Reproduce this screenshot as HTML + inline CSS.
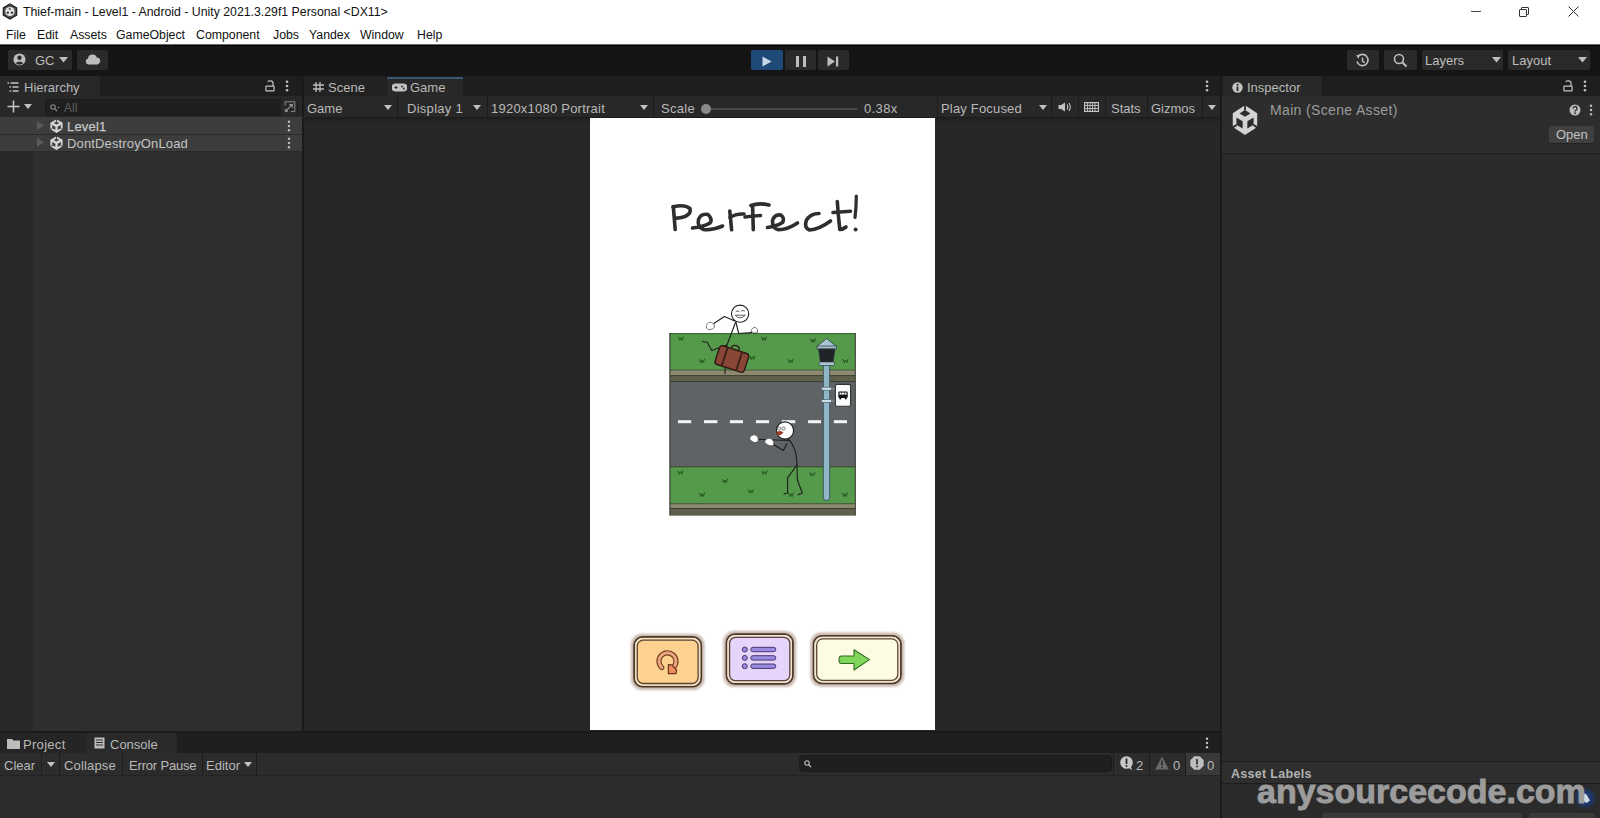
<!DOCTYPE html>
<html><head><meta charset="utf-8">
<style>
*{margin:0;padding:0;box-sizing:border-box}
html,body{width:1600px;height:818px;overflow:hidden;background:#282828;font-family:"Liberation Sans",sans-serif}
div,svg{position:absolute}
.t{white-space:nowrap;line-height:1;font-size:13px;color:#b9b9b9}
.k{color:#111;font-size:12.3px}
.btn{background:#2a2a2a;border-radius:2px}
.dv{width:1px;background:#1c1c1c}
</style></head><body>
<svg style="left:0;top:0" width="0" height="0"><defs><symbol id="ulogo" viewBox="0 0 100 100" preserveAspectRatio="none">
<path d="M50 1 L97 27.5 V73.5 L50 100 L3 73.5 V27.5Z" fill="#d4d4d4"/>
<path d="M50 17 L71 28.5 L50 39 L29 28.5Z" fill="currentColor"/>
<path d="M17 42 L41 54.5 V78 L17 66Z" fill="currentColor"/>
<path d="M83 42 L59 54.5 V78 L83 66Z" fill="currentColor"/>
<path d="M50 0 V18" stroke="currentColor" stroke-width="7"/>
<path d="M0 76.5 L18 66" stroke="currentColor" stroke-width="7"/>
<path d="M100 76.5 L82 66" stroke="currentColor" stroke-width="7"/>
</symbol></defs></svg>
<!-- ============ title bar ============ -->
<div style="left:0;top:0;width:1600px;height:44px;background:#fff"></div>
<div style="left:0;top:44px;width:1600px;height:1px;background:#6a6a6a"></div>
<div style="left:0;top:45px;width:1600px;height:1px;background:#050505"></div>
<svg style="left:2px;top:3px" width="16" height="17" viewBox="0 0 16 17">
  <path d="M8 1 L14.6 4.8 L14.6 12.2 L8 16 L1.4 12.2 L1.4 4.8 Z" fill="#555" stroke="#222" stroke-width="1.4"/>
  <circle cx="7.9" cy="8.5" r="4.6" fill="#e6e6e6"/>
  <circle cx="7.8" cy="6" r="1.2" fill="#777"/><circle cx="5.8" cy="9.6" r="1.2" fill="#333"/><circle cx="9.9" cy="9.6" r="1.2" fill="#333"/>
</svg>
<div class="t k" style="left:23px;top:6px">Thief-main - Level1 - Android - Unity 2021.3.29f1 Personal &lt;DX11&gt;</div>
<div class="t k" style="left:6px;top:28.5px">File</div>
<div class="t k" style="left:37px;top:28.5px">Edit</div>
<div class="t k" style="left:70px;top:28.5px">Assets</div>
<div class="t k" style="left:116px;top:28.5px">GameObject</div>
<div class="t k" style="left:196px;top:28.5px">Component</div>
<div class="t k" style="left:273px;top:28.5px">Jobs</div>
<div class="t k" style="left:309px;top:28.5px">Yandex</div>
<div class="t k" style="left:360px;top:28.5px">Window</div>
<div class="t k" style="left:417px;top:28.5px">Help</div>
<!-- window controls -->
<div style="left:1471px;top:11px;width:10px;height:1px;background:#444"></div>
<div style="left:1521px;top:6.5px;width:8px;height:8px;border:1px solid #333;border-radius:1px;background:#fff"></div>
<div style="left:1519px;top:8.5px;width:8px;height:8px;border:1px solid #333;border-radius:1px;background:#fff"></div>
<svg style="left:1568px;top:6px" width="11" height="11" viewBox="0 0 11 11"><path d="M0.5 0.5L10.5 10.5M10.5 0.5L0.5 10.5" stroke="#333" stroke-width="1"/></svg>

<!-- ============ main toolbar ============ -->
<div style="left:0;top:46px;width:1600px;height:30px;background:#151515"></div>
<div class="btn" style="left:8px;top:50px;width:64px;height:20px"></div>
<svg style="left:13px;top:53px" width="13" height="13" viewBox="0 0 13 13"><circle cx="6.5" cy="6.5" r="6" fill="#bdbdbd"/><circle cx="6.5" cy="4.8" r="2.2" fill="#2a2a2a"/><path d="M2.6 10.3 Q6.5 6.5 10.4 10.3 Q6.5 13 2.6 10.3Z" fill="#2a2a2a"/></svg>
<div class="t" style="left:35px;top:54px;color:#bdbdbd">GC</div>
<svg style="left:59px;top:57px" width="9" height="6" viewBox="0 0 9 6"><path d="M0 0H9L4.5 5.5Z" fill="#bdbdbd"/></svg>
<div class="btn" style="left:77px;top:50px;width:31px;height:20px"></div>
<svg style="left:85px;top:54px" width="16" height="11" viewBox="0 0 16 11"><path d="M3.5 10.5 A3 3 0 0 1 3 4.6 A4.5 4.5 0 0 1 11.8 3.6 A3.5 3.5 0 0 1 12.5 10.5Z" fill="#bdbdbd"/></svg>

<div style="left:751px;top:50px;width:32px;height:20px;background:#1f4a78;border-radius:2px"></div>
<svg style="left:762px;top:56px" width="10" height="11" viewBox="0 0 10 11"><path d="M0.5 0.5 L9.5 5.5 L0.5 10.5Z" fill="#c8d8ec"/></svg>
<div class="btn" style="left:785px;top:50px;width:31px;height:20px"></div>
<div style="left:796px;top:56px;width:3px;height:11px;background:#bdbdbd"></div>
<div style="left:803px;top:56px;width:3px;height:11px;background:#bdbdbd"></div>
<div class="btn" style="left:818px;top:50px;width:31px;height:20px"></div>
<svg style="left:827px;top:56px" width="12" height="11" viewBox="0 0 12 11"><path d="M0.5 0.5 L8 5.5 L0.5 10.5Z" fill="#bdbdbd"/><rect x="9" y="0.5" width="2.2" height="10" fill="#bdbdbd"/></svg>

<div class="btn" style="left:1347px;top:50px;width:32px;height:20px"></div>
<svg style="left:1355px;top:53px" width="15" height="15" viewBox="0 0 15 15"><path d="M3 3.5 A5.6 5.6 0 1 1 2 8.5" fill="none" stroke="#bdbdbd" stroke-width="1.6"/><path d="M1 2 L4.5 2.5 L3.5 6Z" fill="#bdbdbd"/><path d="M7.5 4.5V8L9.8 9.6" fill="none" stroke="#bdbdbd" stroke-width="1.5"/></svg>
<div class="btn" style="left:1384px;top:50px;width:33px;height:20px"></div>
<svg style="left:1393px;top:53px" width="15" height="15" viewBox="0 0 15 15"><circle cx="6" cy="6" r="4.5" fill="none" stroke="#bdbdbd" stroke-width="1.6"/><path d="M9.2 9.2 L13.5 13.5" stroke="#bdbdbd" stroke-width="2"/></svg>
<div class="btn" style="left:1422px;top:50px;width:81px;height:20px"></div>
<div class="t" style="left:1425px;top:54px;color:#bdbdbd">Layers</div>
<svg style="left:1492px;top:57px" width="9" height="6" viewBox="0 0 9 6"><path d="M0 0H9L4.5 5.5Z" fill="#bdbdbd"/></svg>
<div class="btn" style="left:1508px;top:50px;width:82px;height:20px"></div>
<div class="t" style="left:1512px;top:54px;color:#bdbdbd">Layout</div>
<svg style="left:1578px;top:57px" width="9" height="6" viewBox="0 0 9 6"><path d="M0 0H9L4.5 5.5Z" fill="#bdbdbd"/></svg>

<!-- ============ tab strips ============ -->
<div style="left:0;top:76px;width:1600px;height:20px;background:#1e1e1e"></div>
<!-- hierarchy tab -->
<div style="left:0;top:76px;width:100px;height:20px;background:#282828;border-radius:2px 2px 0 0"></div>
<svg style="left:7px;top:82px" width="12" height="10" viewBox="0 0 12 10"><path d="M0.5 1H2M3.5 1H11.5M2.5 5H4M5.5 5H11.5M2.5 9H4M5.5 9H11.5" stroke="#c2c2c2" stroke-width="1.4"/></svg>
<div class="t" style="left:24px;top:81px">Hierarchy</div>
<svg style="left:265px;top:80px" width="10" height="12" viewBox="0 0 10 12"><path d="M2.5 1.5 Q3 0.8 5.5 0.8 Q8 0.8 8 3 V6.2" fill="none" stroke="#c2c2c2" stroke-width="1.2"/><rect x="0.9" y="6.2" width="8.2" height="4.6" rx="0.6" fill="none" stroke="#c2c2c2" stroke-width="1.2"/></svg>
<svg style="left:285px;top:80px" width="4" height="12" viewBox="0 0 4 12"><circle cx="2" cy="1.8" r="1.3" fill="#c2c2c2"/><circle cx="2" cy="6" r="1.3" fill="#c2c2c2"/><circle cx="2" cy="10.2" r="1.3" fill="#c2c2c2"/></svg>
<!-- scene / game tabs -->
<div style="left:304px;top:76px;width:82px;height:20px;background:#222;border-radius:2px 2px 0 0"></div>
<svg style="left:313px;top:82px" width="11" height="10" viewBox="0 0 11 10"><path d="M3 0V10M7 0V10M0 3H11M0 7H11" stroke="#bdbdbd" stroke-width="1.3"/></svg>
<div class="t" style="left:328px;top:81px">Scene</div>
<div style="left:387px;top:76px;width:76px;height:20px;background:#282828;border-radius:2px 2px 0 0"></div>
<div style="left:387px;top:76px;width:76px;height:1px;background:#1a1a1a"></div><div style="left:387px;top:77px;width:76px;height:2px;background:#3a5575"></div>
<svg style="left:392px;top:82.5px" width="15" height="9" viewBox="0 0 15 9"><path d="M3.5 0.5H11.5A3.5 3.5 0 0 1 11.5 8.5H3.5A3.5 3.5 0 0 1 3.5 0.5Z" fill="#c2c2c2"/><path d="M2.5 4.5H5.5M4 3V6" stroke="#282828" stroke-width="1.1"/><circle cx="10" cy="3.5" r="0.9" fill="#282828"/><circle cx="11.8" cy="5.5" r="0.9" fill="#282828"/></svg>
<div class="t" style="left:410px;top:81px">Game</div>
<svg style="left:1205px;top:80px" width="4" height="12" viewBox="0 0 4 12"><circle cx="2" cy="1.8" r="1.3" fill="#c2c2c2"/><circle cx="2" cy="6" r="1.3" fill="#c2c2c2"/><circle cx="2" cy="10.2" r="1.3" fill="#c2c2c2"/></svg>
<!-- inspector tab -->
<div style="left:1223px;top:76px;width:99px;height:20px;background:#282828;border-radius:2px 2px 0 0"></div>
<svg style="left:1232px;top:82px" width="11" height="11" viewBox="0 0 11 11"><circle cx="5.5" cy="5.5" r="5.2" fill="#c2c2c2"/><rect x="4.6" y="4.5" width="1.8" height="4.5" fill="#282828"/><circle cx="5.5" cy="2.7" r="1" fill="#282828"/></svg>
<div class="t" style="left:1247px;top:81px">Inspector</div>
<svg style="left:1563px;top:80px" width="10" height="12" viewBox="0 0 10 12"><path d="M2.5 1.5 Q3 0.8 5.5 0.8 Q8 0.8 8 3 V6.2" fill="none" stroke="#c2c2c2" stroke-width="1.2"/><rect x="0.9" y="6.2" width="8.2" height="4.6" rx="0.6" fill="none" stroke="#c2c2c2" stroke-width="1.2"/></svg>
<svg style="left:1583px;top:80px" width="4" height="12" viewBox="0 0 4 12"><circle cx="2" cy="1.8" r="1.3" fill="#c2c2c2"/><circle cx="2" cy="6" r="1.3" fill="#c2c2c2"/><circle cx="2" cy="10.2" r="1.3" fill="#c2c2c2"/></svg>

<!-- panel separators -->
<div style="left:302px;top:76px;width:2px;height:657px;background:#1a1a1a"></div>
<div style="left:1220px;top:76px;width:2px;height:742px;background:#1a1a1a"></div>

<!-- ============ hierarchy ============ -->
<div style="left:0;top:96px;width:302px;height:21px;background:#282828"></div>
<svg style="left:7px;top:100px" width="13" height="13" viewBox="0 0 13 13"><path d="M6.5 0.5V12.5M0.5 6.5H12.5" stroke="#c8c8c8" stroke-width="1.5"/></svg>
<svg style="left:24px;top:104px" width="8" height="5" viewBox="0 0 8 5"><path d="M0 0H8L4 5Z" fill="#c2c2c2"/></svg>
<div style="left:45px;top:99px;width:253px;height:17px;background:#1f1f1f;border:1px solid #1b1b1b;border-radius:3px"></div>
<svg style="left:50px;top:104px" width="10" height="8" viewBox="0 0 10 8"><circle cx="3" cy="3" r="2.2" fill="none" stroke="#8a8a8a" stroke-width="1.1"/><path d="M4.6 4.6L7 7" stroke="#8a8a8a" stroke-width="1.2"/><circle cx="8.5" cy="3.5" r="0.8" fill="#8a8a8a"/></svg>
<div class="t" style="left:64px;top:102px;color:#5e5e5e;font-size:12px">All</div>
<div style="left:281px;top:99px;width:16px;height:17px;background:#292929;border-radius:3px"></div>
<svg style="left:284px;top:101px" width="12" height="12" viewBox="0 0 12 12"><path d="M1 4.5V0.8H10.8V10.6H6.8" fill="none" stroke="#8a8a8a" stroke-width="1"/><rect x="0.8" y="8" width="3" height="3" fill="#8a8a8a"/><path d="M3.5 8.3L8 3.8M5.3 3.6H8.3V6.6" fill="none" stroke="#9a9a9a" stroke-width="1.1"/></svg>

<div style="left:0;top:117px;width:302px;height:614px;background:#2e2e2e"></div>
<div style="left:0;top:151px;width:33px;height:580px;background:#282828"></div>
<div style="left:0;top:117px;width:302px;height:17px;background:#3d3d3d"></div>
<div style="left:0;top:134px;width:302px;height:1px;background:#2a2a2a"></div>
<div style="left:0;top:135px;width:302px;height:16px;background:#3c3c3c"></div>
<div style="left:0;top:151px;width:302px;height:1px;background:#2a2a2a"></div>
<svg style="left:37px;top:121px" width="7" height="9" viewBox="0 0 7 9"><path d="M0 0L7 4.5L0 9Z" fill="#5a5a5a"/></svg>
<svg style="left:37px;top:138px" width="7" height="9" viewBox="0 0 7 9"><path d="M0 0L7 4.5L0 9Z" fill="#5a5a5a"/></svg>
<svg style="left:50px;top:118.5px;color:#3d3d3d" width="13" height="14"><use href="#ulogo"/></svg>
<svg style="left:50px;top:135.5px;color:#3c3c3c" width="13" height="14"><use href="#ulogo"/></svg>
<div class="t" style="left:67px;top:119.5px;color:#c8c8c8;-webkit-text-stroke:0.25px #c8c8c8;letter-spacing:0.2px">Level1</div>
<div class="t" style="left:67px;top:136.5px;color:#c4c4c4;letter-spacing:0.14px">DontDestroyOnLoad</div>
<svg style="left:287px;top:120px" width="4" height="12" viewBox="0 0 4 12"><circle cx="2" cy="1.8" r="1.2" fill="#bdbdbd"/><circle cx="2" cy="6" r="1.2" fill="#bdbdbd"/><circle cx="2" cy="10.2" r="1.2" fill="#bdbdbd"/></svg>
<svg style="left:287px;top:137px" width="4" height="12" viewBox="0 0 4 12"><circle cx="2" cy="1.8" r="1.2" fill="#bdbdbd"/><circle cx="2" cy="6" r="1.2" fill="#bdbdbd"/><circle cx="2" cy="10.2" r="1.2" fill="#bdbdbd"/></svg>

<!-- ============ game view ============ -->
<div style="left:304px;top:96px;width:916px;height:22px;background:#282828"></div>
<div class="t" style="left:307px;top:101.5px">Game</div>
<svg style="left:384px;top:105px" width="8" height="5" viewBox="0 0 8 5"><path d="M0 0H8L4 5Z" fill="#c2c2c2"/></svg>
<div class="dv" style="left:397px;top:96px;height:22px"></div>
<div class="t" style="left:407px;top:101.5px;letter-spacing:0.28px">Display 1</div>
<svg style="left:473px;top:105px" width="8" height="5" viewBox="0 0 8 5"><path d="M0 0H8L4 5Z" fill="#c2c2c2"/></svg>
<div class="dv" style="left:487px;top:96px;height:22px"></div>
<div class="t" style="left:491px;top:101.5px;letter-spacing:0.23px">1920x1080 Portrait</div>
<svg style="left:640px;top:105px" width="8" height="5" viewBox="0 0 8 5"><path d="M0 0H8L4 5Z" fill="#c2c2c2"/></svg>
<div class="dv" style="left:653px;top:96px;height:22px"></div>
<div class="t" style="left:661px;top:101.5px;letter-spacing:0.29px">Scale</div>
<div style="left:706px;top:108px;width:151px;height:2px;background:#4a4a4a"></div>
<div style="left:701px;top:104px;width:10px;height:10px;border-radius:5px;background:#8a8a8a"></div>
<div class="t" style="left:864px;top:101.5px;letter-spacing:0.36px">0.38x</div>
<div class="dv" style="left:937px;top:96px;height:22px"></div>
<div class="t" style="left:941px;top:101.5px;letter-spacing:0.18px">Play Focused</div>
<svg style="left:1039px;top:105px" width="8" height="5" viewBox="0 0 8 5"><path d="M0 0H8L4 5Z" fill="#c2c2c2"/></svg>
<div class="dv" style="left:1051px;top:96px;height:22px"></div>
<svg style="left:1058px;top:102px" width="14" height="10" viewBox="0 0 14 10"><path d="M0.5 3H3L7 0.5V9.5L3 7H0.5Z" fill="#c2c2c2"/><path d="M9 2.5Q10.5 5 9 7.5M11 1Q13.5 5 11 9" fill="none" stroke="#c2c2c2" stroke-width="1.1"/></svg>
<div class="dv" style="left:1078px;top:96px;height:22px"></div>
<svg style="left:1084px;top:102px" width="15" height="10" viewBox="0 0 15 10"><rect x="0.6" y="0.6" width="13.8" height="8.8" fill="none" stroke="#c2c2c2" stroke-width="1.2"/><path d="M1 3.5H14M1 6.5H14M3.5 1V9M6 1V9M8.5 1V9M11 1V9" stroke="#c2c2c2" stroke-width="0.9"/></svg>
<div class="dv" style="left:1105px;top:96px;height:22px"></div>
<div class="t" style="left:1111px;top:101.5px">Stats</div>
<div class="dv" style="left:1147px;top:96px;height:22px"></div>
<div class="t" style="left:1151px;top:101.5px">Gizmos</div>
<div class="dv" style="left:1202px;top:96px;height:22px"></div>
<svg style="left:1208px;top:105px" width="8" height="5" viewBox="0 0 8 5"><path d="M0 0H8L4 5Z" fill="#c2c2c2"/></svg>
<div style="left:304px;top:118px;width:916px;height:613px;background:#272727"></div>
<div style="left:304px;top:117px;width:916px;height:1px;background:#1c1c1c"></div>
<div style="left:304px;top:118px;width:916px;height:5px;background:linear-gradient(#1f1f1f,rgba(39,39,39,0))"></div>

<!-- game screen -->
<div id="screen" style="left:590px;top:118px;width:345px;height:612px;background:#fff;overflow:hidden"></div>
<svg style="left:590px;top:118px" width="345" height="612" viewBox="590 118 345 612">
<defs>
<filter id="blur1" x="-20%" y="-30%" width="140%" height="160%"><feGaussianBlur stdDeviation="1.3"/></filter>
<filter id="soft" x="-10%" y="-10%" width="120%" height="120%"><feGaussianBlur stdDeviation="0.35"/></filter>
</defs>
<!-- Perfect! -->
<g fill="none" stroke="#2f2f2f" stroke-width="3.6" stroke-linecap="round" stroke-linejoin="round" filter="url(#soft)">
<path d="M673.3 206.5 L675.2 229.5"/>
<path d="M673 207 Q684 204 690 208.5 Q691.5 213.5 685 216.5 Q679 218.5 675 218"/>
<path d="M692.5 228 Q703 227 710 223 Q713 219.5 708 214.5 Q701 213 698.5 219.5 Q697 227 703.5 229.5 Q712 230.5 722.5 226"/>
<path d="M729.8 211 L731.6 229.8"/>
<path d="M730 217.5 Q736 213.5 744 214"/>
<path d="M751 205.5 Q759 202.5 769 205"/>
<path d="M752.6 206 L753.3 229.8"/>
<path d="M745 217 Q752 216 760.5 215.5"/>
<path d="M767.5 227.5 Q776 226.5 782.5 222.5 Q785 218.5 781 215 Q774.5 214 772.5 220.5 Q772 228 778.5 229.8 Q788 229.5 797.5 223"/>
<path d="M819 213.5 Q810.5 213.5 806.5 220 Q803.5 227.5 809.5 230 Q819 229.5 830.5 221"/>
<path d="M837.3 201.5 Q838.2 215 839.8 229.5 Q843 229.5 846 227"/>
<path d="M833 212.5 L850.5 211.2"/>
<path d="M856.3 196 Q856.3 207 855 217.5" stroke-width="3.2"/>
</g>
<circle cx="855.6" cy="229.6" r="2" fill="#2f2f2f"/>

<!-- road scene -->
<rect x="669.5" y="333" width="186" height="182.5" fill="#585a4a"/>
<rect x="670" y="333.5" width="185" height="36.5" fill="#55994a"/>
<rect x="669.5" y="333" width="186" height="1.2" fill="#3f6c36"/>
<rect x="670" y="369.5" width="185" height="1" fill="#4a5a3a"/>
<rect x="670" y="370.5" width="185" height="4.7" fill="#8b8a6f"/>
<rect x="670" y="375.2" width="185" height="1" fill="#3a3c2c"/>
<rect x="670" y="376.2" width="185" height="5" fill="#5e604c"/>
<rect x="670" y="381.2" width="185" height="1" fill="#33362c"/>
<rect x="670" y="382.2" width="185" height="84.3" fill="#5f6366"/>
<rect x="670" y="466.2" width="185" height="1.2" fill="#3b5234"/>
<rect x="670" y="467.4" width="185" height="36" fill="#55994a"/>
<rect x="670" y="503.3" width="185" height="1" fill="#4a5a3a"/>
<rect x="670" y="504.3" width="185" height="3.7" fill="#8b8a6f"/>
<rect x="670" y="508" width="185" height="1" fill="#3a3c2c"/>
<rect x="670" y="509" width="185" height="6.3" fill="#5e604c"/>
<rect x="669.5" y="333" width="1" height="182.5" fill="#3a3f38"/>
<rect x="854.8" y="333" width="1" height="182.5" fill="#3a3f38"/>
<!-- dashes -->
<g fill="#f4f4f4">
<rect x="678" y="420.2" width="13.2" height="3"/><rect x="704" y="420.2" width="13.4" height="3"/><rect x="729.9" y="420.2" width="13.1" height="3"/><rect x="755.9" y="420.2" width="13.2" height="3"/><rect x="781.9" y="420.2" width="13.4" height="3"/><rect x="808.1" y="420.2" width="12.9" height="3"/><rect x="833.8" y="420.2" width="13.2" height="3"/>
</g>
<!-- grass tufts -->
<g fill="none" stroke="#24561f" stroke-width="1" stroke-linecap="round">
<path d="M678.5 337.1 L679.8 340.40000000000003 L681 337.6 L682.2 340.40000000000003 L683.5 336.8"/>
<path d="M761.5 337.1 L762.8 340.40000000000003 L764 337.6 L765.2 340.40000000000003 L766.5 336.8"/>
<path d="M810.5 339.0 L811.8 342.3 L813 339.5 L814.2 342.3 L815.5 338.7"/>
<path d="M699.5 359.5 L700.8 362.8 L702 360 L703.2 362.8 L704.5 359.2"/>
<path d="M788.2 359.5 L789.5 362.8 L790.7 360 L791.9000000000001 362.8 L793.2 359.2"/>
<path d="M843.0 359.5 L844.3 362.8 L845.5 360 L846.7 362.8 L848.0 359.2"/>
<path d="M749.9 356.2 L751.1999999999999 359.5 L752.4 356.7 L753.6 359.5 L754.9 355.9"/>
<path d="M678.0 471.0 L679.3 474.3 L680.5 471.5 L681.7 474.3 L683.0 470.7"/>
<path d="M722.5 479.5 L723.8 482.8 L725 480 L726.2 482.8 L727.5 479.2"/>
<path d="M699.5 493.2 L700.8 496.5 L702 493.7 L703.2 496.5 L704.5 492.9"/>
<path d="M748.3 489.8 L749.5999999999999 493.1 L750.8 490.3 L752.0 493.1 L753.3 489.5"/>
<path d="M762.0 471.0 L763.3 474.3 L764.5 471.5 L765.7 474.3 L767.0 470.7"/>
<path d="M809.9 472.7 L811.1999999999999 476.0 L812.4 473.2 L813.6 476.0 L814.9 472.4"/>
<path d="M788.5 493.2 L789.8 496.5 L791 493.7 L792.2 496.5 L793.5 492.9"/>
<path d="M842.5 493.2 L843.8 496.5 L845 493.7 L846.2 496.5 L847.5 492.9"/>
</g>
<!-- lamp post -->
<rect x="823.3" y="362" width="6.4" height="138.5" rx="3" fill="#8fb6c6" stroke="#3b4d55" stroke-width="0.9"/>
<rect x="821.5" y="387.3" width="10" height="3" rx="1" fill="#cde0e8" stroke="#3b4d55" stroke-width="0.6"/>
<rect x="821.5" y="399.5" width="10" height="3" rx="1" fill="#cde0e8" stroke="#3b4d55" stroke-width="0.6"/>
<path d="M831.5 388.8H835.5M831.5 401H835.5" stroke="#8a9aa0" stroke-width="1"/>
<path d="M826.6 338.5 L836.5 346.5 H816.7 Z" fill="#a8c6d2" stroke="#2d3a40" stroke-width="0.8"/>
<rect x="817" y="346" width="19.5" height="3" fill="#9fbccb" stroke="#2d3a40" stroke-width="0.7"/>
<path d="M818.5 349 H835 L833 362.5 H820.5Z" fill="#1f2326" stroke="#2d3a40" stroke-width="0.8"/>
<rect x="819" y="362" width="15.5" height="3.5" rx="1" fill="#a8c6d2" stroke="#2d3a40" stroke-width="0.7"/>
<!-- bus sign -->
<rect x="835.4" y="384.4" width="15.2" height="21.8" rx="1.5" fill="#fbfbfb" stroke="#2e3438" stroke-width="1.1"/>
<rect x="838.3" y="391.5" width="9.4" height="6.5" rx="1.2" fill="#111"/>
<rect x="839.5" y="392.6" width="2" height="2" fill="#fff"/><rect x="842" y="392.6" width="2" height="2" fill="#fff"/><rect x="844.5" y="392.6" width="2" height="2" fill="#fff"/>
<circle cx="840.3" cy="398.6" r="1" fill="#111"/><circle cx="845.7" cy="398.6" r="1" fill="#111"/>

<!-- thief on top -->
<g fill="none" stroke="#1d1d1d" stroke-width="1.1" stroke-linecap="round" stroke-linejoin="round">
<path d="M735.5 322.5 L727 345 L724.9 373.5"/>
<path d="M727 345 L711.7 350.5 L707.3 342.3 L702.4 341.5"/>
<path d="M734.8 321 L724.4 316.5 L713 324"/>
<path d="M736 322.5 L738.7 333.5 L751.5 332.5"/>
</g>
<circle cx="740.1" cy="313.7" r="8.6" fill="#fff" stroke="#1d1d1d" stroke-width="1.1"/>
<g fill="none" stroke="#333" stroke-width="0.8" stroke-linecap="round">
<path d="M736 311.5 Q737.5 310 739 311.5"/><path d="M741.5 311 Q743 309.5 744.5 311"/>
<path d="M735.5 315.5 Q740 320.5 745 315.5 Z" fill="#fff"/>
</g>
<path d="M706.5 325.5 Q707.5 321.5 711.5 322.5 Q715 323 714.5 327 Q713 330 709 329.5 Q705.5 329 706.5 325.5Z" fill="#fff" stroke="#444" stroke-width="0.7"/>
<path d="M751 331.5 Q752 327 755.5 327.5 Q758.5 329 757.5 332.5 Q755 334 751 331.5Z" fill="#fff" stroke="#444" stroke-width="0.7"/>
<!-- suitcase -->
<g transform="translate(731.9 359) rotate(18)">
<path d="M-4 -10.5 Q-4 -14 0 -14 Q4 -14 4 -10.5" fill="none" stroke="#2a1a14" stroke-width="1.3"/>
<rect x="-15.3" y="-9.8" width="30.6" height="19.6" rx="3" fill="#8a4636" stroke="#2c1912" stroke-width="1.4"/>
<rect x="-8.5" y="-9.8" width="1.8" height="19.6" fill="#3a2018"/>
<rect x="6.7" y="-9.8" width="1.8" height="19.6" fill="#3a2018"/>
</g>

<!-- man on road -->
<g fill="none" stroke="#1d1d1d" stroke-width="1.1" stroke-linecap="round" stroke-linejoin="round">
<path d="M788 439 Q797 447 797 465"/>
<path d="M797 465 L787.6 477.8 L787.6 493 L784 494"/>
<path d="M797 465 L797.3 479.5 L802.3 493 L798 494.7"/>
<path d="M790 440.5 L757 439.3"/>
<path d="M787 443.5 L783.3 450.5 L771 443"/>
</g>
<circle cx="785" cy="430.5" r="8.6" fill="#fff" stroke="#1d1d1d" stroke-width="1.1"/>
<path d="M777.5 431.5 Q781 430 783.5 432.5 Q781.5 435.5 777 435.5 Q775.5 433.5 777.5 431.5Z" fill="#9a3b28"/>
<g fill="none" stroke="#444" stroke-width="0.7"><circle cx="779" cy="428.5" r="1.6"/><circle cx="783.5" cy="428.5" r="1.6"/></g>
<path d="M749.5 439 Q751 434 755.5 435 Q759.5 437.5 758 441.5 Q754 444.5 749.5 439Z" fill="#fff" stroke="#444" stroke-width="0.7"/>
<path d="M764.5 442 Q766 437.5 771 438.5 Q775 441 773.5 445.5 Q768.5 447 764.5 442Z" fill="#fff" stroke="#444" stroke-width="0.7"/>

<!-- buttons -->
<rect x="630.9" y="633.7" width="73.60000000000002" height="56.19999999999993" rx="11" fill="#9c7f6c" opacity="0.55" filter="url(#blur1)"/>
<rect x="634.1999999999999" y="637.0" width="67.00000000000003" height="49.59999999999993" rx="8.5" fill="#fdd290" stroke="#4a3626" stroke-width="1.8"/>
<rect x="635.8" y="638.6" width="63.800000000000026" height="46.399999999999935" rx="7" fill="none" stroke="#efe3cc" stroke-width="1.5"/>
<rect x="637.3" y="640.1" width="60.800000000000026" height="43.399999999999935" rx="6" fill="none" stroke="#5a4636" stroke-width="1.3"/>
<rect x="723.2" y="630.9" width="73.0" height="56.200000000000045" rx="11" fill="#9c7f6c" opacity="0.55" filter="url(#blur1)"/>
<rect x="726.5" y="634.1999999999999" width="66.4" height="49.600000000000044" rx="8.5" fill="#e7d4fb" stroke="#4a3626" stroke-width="1.8"/>
<rect x="728.1" y="635.8" width="63.2" height="46.40000000000005" rx="7" fill="none" stroke="#efe3cc" stroke-width="1.5"/>
<rect x="729.6" y="637.3" width="60.2" height="43.40000000000005" rx="6" fill="none" stroke="#5a4636" stroke-width="1.3"/>
<rect x="810.3" y="632.5" width="93.90000000000009" height="54.200000000000045" rx="11" fill="#9c7f6c" opacity="0.55" filter="url(#blur1)"/>
<rect x="813.5999999999999" y="635.8" width="87.3000000000001" height="47.600000000000044" rx="8.5" fill="#fdfce2" stroke="#4a3626" stroke-width="1.8"/>
<rect x="815.1999999999999" y="637.4" width="84.1000000000001" height="44.40000000000005" rx="7" fill="none" stroke="#efe3cc" stroke-width="1.5"/>
<rect x="816.6999999999999" y="638.9" width="81.1000000000001" height="41.40000000000005" rx="6" fill="none" stroke="#5a4636" stroke-width="1.3"/>
<!-- restart icon -->
<path d="M661.8 667.6 A8.5 8.5 0 1 1 673.8 667" fill="none" stroke="#6e3a1e" stroke-width="5.2" stroke-linecap="round"/>
<path d="M661.8 667.6 A8.5 8.5 0 1 1 673.8 667" fill="none" stroke="#eea57c" stroke-width="3" stroke-linecap="round"/>
<path d="M668.4 664.6 L671.6 664.9 L676.6 670 L675.9 673.6 L668.4 673.6 Z" fill="#f08c62" stroke="#6e3a1e" stroke-width="1.3" stroke-linejoin="round"/>
<!-- list icon -->
<g fill="#9a8ae0" stroke="#45386e" stroke-width="1">
<circle cx="744.8" cy="649.5" r="2.5"/><circle cx="744.8" cy="657.9" r="2.5"/><circle cx="744.8" cy="666.2" r="2.5"/>
<rect x="750.8" y="647.3" width="25" height="4.4" rx="2.2"/><rect x="750.8" y="655.7" width="25" height="4.4" rx="2.2"/><rect x="750.8" y="664" width="25" height="4.4" rx="2.2"/>
</g>
<!-- arrow icon -->
<path d="M841.5 656 H854 V649.8 L869.5 659.6 L854 670 V663.5 H841.5 Q839 663.5 839 659.7 Q839 656 841.5 656Z" fill="#7fd65a" stroke="#2f6a22" stroke-width="1.1" stroke-linejoin="round"/>
</svg>

<!-- ============ inspector ============ -->
<div style="left:1222px;top:96px;width:378px;height:57px;background:#2d2d2d"></div>
<div style="left:1222px;top:153px;width:378px;height:1px;background:#1a1a1a"></div>
<div style="left:1222px;top:154px;width:378px;height:607px;background:#2b2b2b"></div>
<svg style="left:1232px;top:104.5px;color:#2d2d2d" width="26" height="30"><use href="#ulogo"/></svg>
<div class="t" style="left:1270px;top:103px;font-size:14px;letter-spacing:0.35px;color:#9c9c9c">Main (Scene Asset)</div>
<svg style="left:1569px;top:104px" width="12" height="12" viewBox="0 0 12 12"><circle cx="6" cy="6" r="5.5" fill="#bdbdbd"/><path d="M4.2 4.6A1.9 1.9 0 1 1 6.6 6.3Q6 6.6 6 7.5" fill="none" stroke="#2d2d2d" stroke-width="1.4"/><circle cx="6" cy="9.2" r="0.9" fill="#2d2d2d"/></svg>
<svg style="left:1589px;top:104px" width="4" height="12" viewBox="0 0 4 12"><circle cx="2" cy="1.8" r="1.2" fill="#bdbdbd"/><circle cx="2" cy="6" r="1.2" fill="#bdbdbd"/><circle cx="2" cy="10.2" r="1.2" fill="#bdbdbd"/></svg>
<div style="left:1549px;top:126px;width:45px;height:18px;background:#404040;border-radius:3px;border-bottom:1px solid #222"></div>
<div class="t" style="left:1556px;top:128px;color:#c0c0c0">Open</div>

<div style="left:1222px;top:761px;width:378px;height:1px;background:#1c1c1c"></div>
<div style="left:1222px;top:762px;width:378px;height:21px;background:#2e2e2e"></div>
<div style="left:1222px;top:783px;width:378px;height:1px;background:#1c1c1c"></div>
<div style="left:1222px;top:784px;width:378px;height:34px;background:#2b2b2b"></div>
<div class="t" style="left:1231px;top:767.5px;font-size:12.5px;font-weight:bold;color:#b2b2b2;letter-spacing:0.3px">Asset Labels</div>
<div style="left:1322px;top:813px;width:200px;height:10px;background:#3a3a3a;border-radius:3px"></div>
<div style="left:1529px;top:813px;width:66px;height:10px;background:#3a3a3a;border-radius:3px"></div>
<div style="left:1576px;top:789px;width:18px;height:18px;background:#1b3a78;border-radius:9px;filter:blur(2px)"></div>
<svg style="left:1578px;top:791px" width="14" height="14" viewBox="1578 791 14 14"><path d="M1579.5 796.5 L1583.5 793 L1586.5 794.5 L1590 800.5 L1586.5 803 L1580.5 799.5Z" fill="#d0d8e0"/><circle cx="1583.2" cy="795.6" r="0.9" fill="#555"/></svg>

<!-- ============ bottom console ============ -->
<div style="left:0;top:731px;width:1220px;height:2px;background:#1a1a1a"></div>
<div style="left:0;top:733px;width:1220px;height:20px;background:#1f1f1f"></div>
<div style="left:0;top:733px;width:86px;height:20px;background:#252525;border-radius:2px 2px 0 0"></div>
<svg style="left:7px;top:739px" width="13" height="10" viewBox="0 0 13 10"><path d="M0 0H5L6.5 1.5H13V10H0Z" fill="#bdbdbd"/></svg>
<div class="t" style="left:23px;top:737.5px;letter-spacing:0.3px">Project</div>
<div style="left:86px;top:733px;width:91px;height:20px;background:#2a2a2a;border-radius:2px 2px 0 0"></div>
<svg style="left:94px;top:737px" width="11" height="12" viewBox="0 0 11 12"><rect x="0.5" y="0.5" width="10" height="11" fill="#bdbdbd"/><path d="M2 3H9M2 5.5H9M2 8H9" stroke="#2a2a2a" stroke-width="1"/></svg>
<div class="t" style="left:110px;top:737.5px">Console</div>
<svg style="left:1205px;top:737px" width="4" height="12" viewBox="0 0 4 12"><circle cx="2" cy="1.8" r="1.2" fill="#c2c2c2"/><circle cx="2" cy="6" r="1.2" fill="#c2c2c2"/><circle cx="2" cy="10.2" r="1.2" fill="#c2c2c2"/></svg>

<div style="left:0;top:753px;width:1220px;height:22px;background:#2c2c2c"></div>
<div style="left:0;top:775px;width:1220px;height:1px;background:#242424"></div>
<div class="t" style="left:4px;top:758.5px">Clear</div>
<div class="dv" style="left:41px;top:753px;height:22px"></div>
<svg style="left:47px;top:762px" width="8" height="5" viewBox="0 0 8 5"><path d="M0 0H8L4 5Z" fill="#c2c2c2"/></svg>
<div class="dv" style="left:59px;top:753px;height:22px"></div>
<div class="t" style="left:64px;top:758.5px;letter-spacing:0.17px">Collapse</div>
<div class="dv" style="left:122px;top:753px;height:22px"></div>
<div class="t" style="left:129px;top:758.5px;letter-spacing:-0.18px">Error Pause</div>
<div class="dv" style="left:202px;top:753px;height:22px"></div>
<div class="t" style="left:206px;top:758.5px">Editor</div>
<svg style="left:244px;top:762px" width="8" height="5" viewBox="0 0 8 5"><path d="M0 0H8L4 5Z" fill="#c2c2c2"/></svg>
<div class="dv" style="left:256px;top:753px;height:22px"></div>
<div style="left:799px;top:755px;width:313px;height:17px;background:#1f1f1f;border:1px solid #1a1a1a;border-radius:4px"></div>
<svg style="left:804px;top:760px" width="8" height="8" viewBox="0 0 8 8"><circle cx="3" cy="3" r="2.2" fill="none" stroke="#bdbdbd" stroke-width="1.1"/><path d="M4.6 4.6L7 7" stroke="#bdbdbd" stroke-width="1.3"/></svg>
<div class="dv" style="left:1113px;top:753px;height:22px"></div>
<svg style="left:1120px;top:756px" width="14" height="15" viewBox="0 0 14 15"><circle cx="6.5" cy="6.5" r="6.3" fill="#c8c8c8"/><path d="M8 11L12 14.5L10.5 9Z" fill="#c8c8c8"/><rect x="5.6" y="2.5" width="1.8" height="5.5" fill="#282828"/><circle cx="6.5" cy="10" r="1" fill="#282828"/></svg>
<div class="t" style="left:1136px;top:758.5px">2</div>
<div class="dv" style="left:1149px;top:753px;height:22px"></div>
<svg style="left:1155px;top:756px" width="14" height="14" viewBox="0 0 14 14"><path d="M7 0.5L13.8 13.5H0.2Z" fill="#6a6a6a"/><rect x="6.2" y="4.5" width="1.6" height="5" fill="#282828"/><circle cx="7" cy="11.3" r="0.9" fill="#282828"/></svg>
<div class="t" style="left:1173px;top:758.5px">0</div>
<div class="dv" style="left:1185px;top:753px;height:22px"></div>
<div style="left:1186px;top:753px;width:34px;height:22px;background:#393939"></div>
<svg style="left:1190px;top:756px" width="14" height="14" viewBox="0 0 14 14"><path d="M4.2 0.3H9.8L13.7 4.2V9.8L9.8 13.7H4.2L0.3 9.8V4.2Z" fill="#bdbdbd"/><rect x="6.1" y="3" width="1.8" height="5.5" fill="#393939"/><circle cx="7" cy="10.5" r="1" fill="#393939"/></svg>
<div class="t" style="left:1207px;top:758.5px">0</div>
<div style="left:0;top:776px;width:1220px;height:42px;background:#2c2c2c"></div>

<!-- watermark -->
<div class="t" style="left:1257px;top:774px;font-size:34px;font-weight:bold;color:#9c9c9c;-webkit-text-stroke:0.9px #9c9c9c">anysourcecode.com</div>
</body></html>
